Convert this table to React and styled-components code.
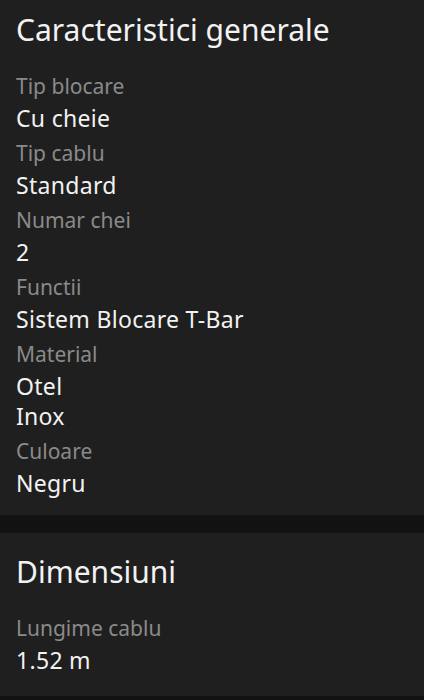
import styled, { createGlobalStyle } from "styled-components";

const GlobalStyle = createGlobalStyle`
  html, body {
    margin: 0;
    padding: 0;
    background: #121212;
  }
  body {
    font-family: "Noto Sans", Roboto, sans-serif;
  }
`;

const sections = [
  {
    title: "Caracteristici generale",
    top: 10,
    bottom: 12,
    rows: [
      { label: "Tip blocare", values: ["Cu cheie"] },
      { label: "Tip cablu", values: ["Standard"] },
      { label: "Numar chei", values: ["2"] },
      { label: "Functii", values: ["Sistem Blocare T-Bar"] },
      { label: "Material", values: ["Otel", "Inox"] },
      { label: "Culoare", values: ["Negru"] },
    ],
  },
  {
    title: "Dimensiuni",
    top: 19,
    bottom: 16,
    rows: [{ label: "Lungime cablu", values: ["1.52 m"] }],
  },
];

const App = () => {
  return (
    <Page>
      <GlobalStyle />
      {sections.map((s) => (
        <Card key={s.title} $top={s.top} $bottom={s.bottom}>
          <Title>{s.title}</Title>
          <List>
            {s.rows.map((r) => (
              <Row key={r.label}>
                <Label>{r.label}</Label>
                {r.values.map((v) => (
                  <Value key={v}>{v}</Value>
                ))}
              </Row>
            ))}
          </List>
        </Card>
      ))}
    </Page>
  );
};

const Page = styled.div`
  display: flex;
  flex-direction: column;
  gap: 18px;
  min-height: 700px;
  background: #121212;
`;

const Card = styled.section`
  background: #1f1f1f;
  padding: ${(p) => p.$top}px 16px ${(p) => p.$bottom}px;
`;

const Title = styled.h2`
  margin: 0;
  font-size: 30px;
  font-weight: 400;
  line-height: 39px;
  color: #f2f2f2;
`;

const List = styled.div`
  margin-top: 22px;
  display: flex;
  flex-direction: column;
`;

const Row = styled.div`
  display: flex;
  flex-direction: column;
  margin-bottom: 5px;
`;

const Label = styled.div`
  font-size: 21px;
  line-height: 30px;
  margin-bottom: 2px;
  color: #8a8a8a;
`;

const Value = styled.div`
  font-size: 23px;
  line-height: 30px;
  letter-spacing: 0.3px;
  color: #f2f2f2;
`;

export default App;
